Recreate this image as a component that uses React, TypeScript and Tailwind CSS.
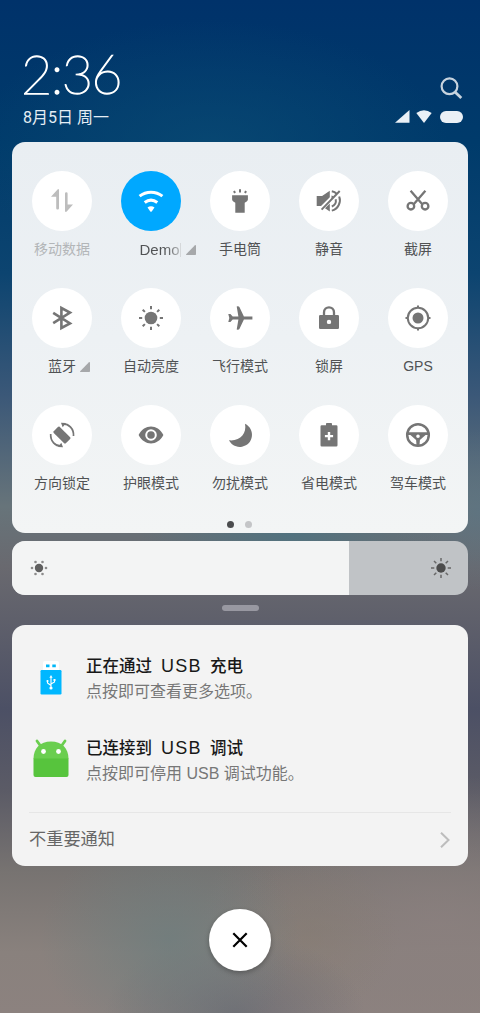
import type { ReactNode } from "react";

type Tile = {
  label: string;
  icon: ReactNode;
  active?: boolean;
  disabled?: boolean;
  expandable?: boolean;
};

const line = {
  fill: "none",
  stroke: "currentColor",
  strokeWidth: 2,
} as const;

const tiles: Tile[] = [
  {
    label: "移动数据",
    disabled: true,
    icon: (
      <>
        <path d="M1 7.8 7.8.2H9v19q0 1.2-1.2 1.2H7.4q-1.2 0-1.2-1.2V7.8Z" />
        <path d="M15 4.4q0-1.2 1.3-1.2t1.3 1.2v11H23l-6.5 7.4H15Z" />
      </>
    ),
  },
  {
    label: "Demo",
    active: true,
    expandable: true,
    icon: (
      <>
        <path {...line} strokeWidth={3.1} d="M.6 7.1C7.2 1.9 16.8 1.9 23.4 7.1" />
        <path {...line} strokeWidth={3.1} d="M5.7 13.4c4-3 8.600-3 12.600 0" />
        <path d="M8.500 18.500c2-1.600 5-1.600 7 0L12.700 22.500q-.7.7-1.400 0Z" />
      </>
    ),
  },
  {
    label: "手电筒",
    icon: (
      <>
        <path d="M4.100 6.200h15.800v4.200q0 1.200-1.200 2l-2 1.400v9.900H7.300v-9.900l-2-1.400q-1.200-.8-1.200-2Z" />
        <path {...line} d="M12 .2v3.400M6 2l1 2M18 2l-1 2" />
      </>
    ),
  },
  {
    label: "静音",
    icon: (
      <>
        <path d="M-.3 7h5.400l7.700-5.200v6.500L4 17H-.3Z" />
        <path d="M8 19.200 12.800 14.500v7.900Z" />
        <path
          {...line}
          strokeWidth={2}
          d="M4.600 20.600 22.700 2M14.800 2.200c2 .4 3.600 1.200 4.800 2.500M22.200 7.500c2.100 5.400-.8 12.500-7.400 14.100M18.700 10.300c.6 3-.8 6-3.900 7.200"
        />
        <path d="M14.500 6.500q1.500.2 2.200 1.200l-2.200 2.200Z" />
      </>
    ),
  },
  {
    label: "截屏",
    icon: (
      <>
        <path {...line} strokeWidth={2.300} d="m4.600 1.800 11.700 13.400M19.400 1.800 7.700 15.200" />
        <circle {...line} strokeWidth={2.300} cx="4.900" cy="17.200" r="3.300" />
        <circle {...line} strokeWidth={2.300} cx="19.100" cy="17.200" r="3.300" />
      </>
    ),
  },
  {
    label: "蓝牙",
    expandable: true,
    icon: (
      <path {...line} strokeWidth={2.600} d="m3.200 6.800 16.800 10.500-8.600 4.700V2L20 6.700 3.200 17.200" />
    ),
  },
  {
    label: "自动亮度",
    icon: (
      <>
        <circle cx="12" cy="12" r="6.300" />
        <path
          {...line}
          d="M12 0v3.200M12 20.800V24M0 12h3.200M20.800 12H24M3.700 3.700 5.900 5.900M18.100 18.100l2.200 2.200M20.300 3.700l-2.200 2.200M5.900 18.100l-2.200 2.200"
        />
      </>
    ),
  },
  {
    label: "飞行模式",
    icon: (
      <path d="M24.400 10.600v2.800h-8.500l-4.500 9.500q-.5 1.100-2.700.7L10.400 13.400H4.700l-2.300 2.500H.3L1.300 12 .3 8.100h2.100l2.300 2.500h5.700L8.700.4q2.200-.4 2.700.7l4.500 9.500Z" />
    ),
  },
  {
    label: "锁屏",
    icon: (
      <>
        <path {...line} strokeWidth={2.300} d="M7 10V6.600c0-6.900 10-6.900 10 0V10" />
        <path
          fillRule="evenodd"
          d="M3.200 9h17.600q1.200 0 1.200 1.200v11.600q0 1.200-1.200 1.200H3.200Q2 23 2 21.800V10.200Q2 9 3.200 9ZM12 13.700a2.200 2.200 0 1 0 0 4.400 2.200 2.200 0 0 0 0-4.400Z"
        />
      </>
    ),
  },
  {
    label: "GPS",
    icon: (
      <>
        <circle {...line} cx="12" cy="12" r="10.200" />
        <circle cx="12" cy="12" r="5.500" />
        <path {...line} d="M12-.5V2M12 22v2.500M-.5 12H2M22 12h2.500" />
      </>
    ),
  },
  {
    label: "方向锁定",
    icon: (
      <>
        <path d="m8.100 3.700 1.200-.3 11.100 11.100v1.200l-4.800 4.900h-1.200L3.500 9.700V8.500Z" />
        <path {...line} strokeWidth={1.700} d="M12 1c7-.5 12 5 11.500 12M12 23C5 23.500.3 18 .7 11" />
        <path d="M11-.2 16 0l-3.300 4.200ZM13 24.200 8 24l3.300-4.200Z" />
      </>
    ),
  },
  {
    label: "护眼模式",
    icon: (
      <>
        <path
          fillRule="evenodd"
          d="M-.4 12C5.500.7 18.500.7 24.400 12 18.500 23.300 5.500 23.300-.4 12ZM12 6.200a5.800 5.800 0 1 0 0 11.600 5.800 5.800 0 0 0 0-11.600Z"
        />
        <circle cx="12" cy="12" r="3.800" />
      </>
    ),
  },
  {
    label: "勿扰模式",
    icon: <path d="M17 .8C27.500 6 26 21.500 14 23.700 8 24.800 3 21.500 1 17.300 12 18.500 19 10.500 17 .8Z" />,
  },
  {
    label: "省电模式",
    icon: (
      <>
        <path d="M4.700 2.300H9V.8q0-.9.9-.9h4.200q.9 0 .9.900v1.500h4.300q1.200 0 1.200 1.200v18.700q0 1.200-1.200 1.200H4.700q-1.200 0-1.200-1.200V3.500q0-1.200 1.200-1.200Z" />
        <path d="M12 9v8.200M7.900 13.100h8.200" stroke="white" strokeWidth="2.400" />
      </>
    ),
  },
  {
    label: "驾车模式",
    icon: (
      <>
        <circle {...line} strokeWidth={2.500} cx="12" cy="12" r="10.800" />
        <path
          fillRule="evenodd"
          d="M1 9.300h22v2.600h-3.400L13.900 17 13.400 23h-2.800L10.100 17 4.400 11.900H1ZM12 11.400a1.800 1.800 0 1 0 0 3.600 1.800 1.800 0 0 0 0-3.600Z"
        />
      </>
    ),
  },
];

function QuickTile({ tile }: { tile: Tile }) {
  const circle = tile.active
    ? "bg-[#00a8ff] text-white"
    : tile.disabled
      ? "bg-white text-[#bdbdbd]"
      : "bg-white text-[#757575]";

  return (
    <div className="flex h-[117px] flex-col items-center">
      <div className={`flex size-[60px] items-center justify-center rounded-full ${circle}`}>
        <svg viewBox="0 0 24 24" className="size-6 overflow-visible" fill="currentColor">
          {tile.icon}
        </svg>
      </div>
      <div
        className={`relative mt-2 flex h-[21px] items-center whitespace-nowrap text-sm leading-[21px] ${
          tile.disabled ? "text-[#b3b6b8]" : "text-[#505254]"
        }`}
      >
        {tile.active ? (
          <span className="ml-[17px] bg-linear-to-r from-[#505254] from-65% to-[#b8bbbd] bg-clip-text text-[15px] text-transparent">
            {tile.label}
          </span>
        ) : (
          <span>{tile.label}</span>
        )}
        {tile.active && <span className="absolute top-1 left-[58px] h-3.5 w-px bg-[#d5d8da]" />}
        {tile.expandable && (
          <svg
            viewBox="0 0 10 10"
            className={`absolute top-[6px] size-2.5 ${tile.active ? "left-[64px]" : "left-[32px]"}`}
            fill="#a6a8aa"
          >
            <path d="M10 .8V9.200q0 .8-.8.8H.8q-1.200 0-.4-.9L8.700.5Q10-.5 10 .8Z" />
          </svg>
        )}
      </div>
    </div>
  );
}

function UsbIcon() {
  return (
    <svg viewBox="0 0 22 34" className="mt-[9px] h-[34px] w-[22px]">
      <rect x="3" y="0" width="16" height="12" rx="2" fill="white" />
      <path d="M6 3.500h3.500v2.800H6zM12.300 3.500h3.500v2.800h-3.500z" fill="#00b7f8" />
      <rect x=".5" y="9" width="21" height="24.500" rx="1.200" fill="#00b7ff" />
      <path
        d="M11 16v11M11 24.500 7.500 22v-2.500M11 23l3.500-2v-2.500"
        stroke="white"
        fill="none"
        strokeWidth="1.100"
      />
      <g fill="white">
        <path d="m11 14 1.600 2.800H9.400z" />
        <circle cx="11" cy="27" r="1.600" />
        <circle cx="7.500" cy="20" r="1.100" />
        <path d="M13.500 18h2v2h-2z" />
      </g>
    </svg>
  );
}

function AndroidIcon() {
  return (
    <svg viewBox="0 0 36 38" className="mt-[5px] h-[38px] w-9">
      <path d="m4 2 5 7M32 2l-5 7" stroke="#6ace4f" strokeWidth="2.800" strokeLinecap="round" />
      <path d="M.5 20C.5 9 7 2.500 18 2.500S35.500 9 35.500 20Z" fill="#6ace4f" />
      <path d="M.5 19.500h35V36q0 2-2 2h-31q-2 0-2-2Z" fill="#57c43d" />
      <circle cx="10.500" cy="12.500" r="2.400" fill="white" />
      <circle cx="25.500" cy="12.500" r="2.400" fill="white" />
    </svg>
  );
}

function Notification({
  icon,
  title,
  text,
}: {
  icon: ReactNode;
  title: [string, string, string];
  text: string;
}) {
  return (
    <div className="flex h-[82px]">
      <div className="flex w-[77px] justify-center">{icon}</div>
      <div className="-ml-[3px] pt-px">
        <div className="flex h-[26px] text-[16.5px] font-medium leading-[26px] text-[#181818]">
          <span>{title[0]}</span>
          <span className="ml-[9px] w-[49px] text-[18px] font-normal tracking-[1.2px]">
            {title[1]}
          </span>
          <span>{title[2]}</span>
        </div>
        <div className="text-base leading-[26px] text-[#777]">{text}</div>
      </div>
    </div>
  );
}

export default function App() {
  return (
    <main className="flex h-[1013px] w-[480px] flex-col overflow-hidden bg-[radial-gradient(ellipse_130px_110px_at_170px_940px,#6a7d7eb0,transparent),radial-gradient(ellipse_130px_80px_at_235px_1013px,#646771b0,transparent),radial-gradient(ellipse_90px_80px_at_310px_935px,#857a6e70,transparent),radial-gradient(ellipse_240px_150px_at_440px_925px,#8b807fcc,transparent),radial-gradient(ellipse_150px_50px_at_290px_535px,#4c7381cc,transparent),radial-gradient(ellipse_90px_80px_at_480px_510px,#5b7483b0,transparent),radial-gradient(ellipse_240px_130px_at_210px_150px,#0b4c75b0,transparent),linear-gradient(180deg,#00326a_0%,#003b6b_14%,#0c4470_27%,#3b5878_39%,#67747a_50%,#69696f_56%,#5f606b_61%,#4c5065_70%,#5b5b66_78%,#777371_86%,#89817d_94%,#8c827f_100%)] px-3 font-['Liberation_Sans','Noto_Sans_CJK_SC',sans-serif]">
      <header className="flex h-[142px] shrink-0 justify-between text-white">
        <div className="pl-[9px] pt-[41px]">
          <div className="h-[65px] whitespace-nowrap font-[Lato,sans-serif] text-[54px] font-extralight leading-[65px] tracking-[-1.6px] [-webkit-text-stroke:1.3px_white]">
            2:36
          </div>
          <div className="pl-[2px] font-[Roboto,'Noto_Sans_CJK_SC',sans-serif] text-[16px] leading-[23px] text-[#e5edf4]">
            8月5日 周一
          </div>
        </div>
        <div className="flex flex-col items-end pr-[5px] pt-[76px]">
          <svg viewBox="0 0 24 24" className="size-6" {...line} opacity=".78">
            <circle cx="10.500" cy="10.300" r="7.900" strokeWidth="2.200" />
            <path d="m16 16 6.300 6" strokeWidth="2.800" />
          </svg>
          <div className="mt-[10px] flex items-center">
            <svg viewBox="0 0 15 13" className="mr-[6px] h-[13px] w-[15px]" fill="#eaf0f6">
              <path d="M14.500 0v12.800H0Z" />
            </svg>
            <svg viewBox="0 0 16 13" className="mr-[8px] h-[13px] w-[16px]" fill="#eaf0f6">
              <path d="M.3 3.100Q8-2.800 15.700 3.100L8 13Z" />
            </svg>
            <div className="h-[12px] w-[23px] rounded-full bg-[#eaf0f6]" />
          </div>
        </div>
      </header>

      <section className="h-[391px] shrink-0 rounded-[13px] bg-linear-to-b from-[#e9eef2] via-[#edf1f4] to-[#f3f5f5] px-[5.5px] pt-[29px]">
        <div className="grid grid-cols-5">
          {tiles.map((tile) => (
            <QuickTile key={tile.label} tile={tile} />
          ))}
        </div>
        <div className="-mt-[1px] flex justify-center gap-[11px] pr-px">
          <span className="size-[7px] rounded-full bg-[#4b4c4e]" />
          <span className="size-[7px] rounded-full bg-[#c4c5c7]" />
        </div>
      </section>

      <div className="mt-[8px] flex h-[54px] shrink-0 overflow-hidden rounded-[13px] bg-[#c0c3c6]">
        <div className="flex w-[337px] items-center bg-[#f3f4f4] pl-[18px]">
          <svg viewBox="0 0 18 18" className="size-[18px]">
            <circle cx="9" cy="9" r="4.200" fill="#606060" />
            <g fill="#8b8b8b">
              <circle cx="2" cy="9" r="1.300" />
              <circle cx="16" cy="9" r="1.300" />
              <circle cx="5.500" cy="3" r="1.300" />
              <circle cx="12.500" cy="3" r="1.300" />
              <circle cx="5.500" cy="15" r="1.300" />
              <circle cx="12.500" cy="15" r="1.300" />
            </g>
          </svg>
        </div>
        <div className="flex flex-1 items-center justify-end pr-[16px]">
          <svg viewBox="0 0 22 22" className="size-[22px]">
            <circle cx="11" cy="11" r="4.700" fill="#4c4c4c" />
            <path
              d="M11 1v3.300M11 17.700V21M1 11h3.300M17.700 11H21M4 4l2.300 2.300M15.700 15.700 18 18M18 4l-2.300 2.300M6.300 15.700 4 18"
              stroke="#686868"
              strokeWidth="1.500"
            />
          </svg>
        </div>
      </div>

      <div className="mx-auto mt-[10px] h-[6px] w-[37px] shrink-0 rounded-full bg-[#9898a1]" />

      <section className="mt-[14px] flex h-[241px] shrink-0 flex-col rounded-[13px] bg-[#f3f3f3] pt-[27px]">
        <Notification
          icon={<UsbIcon />}
          title={["正在通过", "USB", "充电"]}
          text="点按即可查看更多选项。"
        />
        <Notification
          icon={<AndroidIcon />}
          title={["已连接到", "USB", "调试"]}
          text="点按即可停用 USB 调试功能。"
        />
        <div className="mx-[17px] -mt-1 flex h-[54px] items-center justify-between border-t border-[#e6e6e6] text-[17.2px] text-[#666]">
          <span>不重要通知</span>
          <svg viewBox="0 0 10 16" className="mr-[1px] h-[16px] w-[10px]" {...line} stroke="#bdbdbd">
            <path d="m1 .7 7.500 7.300L1 15.300" />
          </svg>
        </div>
      </section>

      <button
        aria-label="清除通知"
        className="mx-auto mt-[43px] flex size-[62px] shrink-0 items-center justify-center rounded-full bg-white text-black shadow-[0_2px_5px_#0004]"
      >
        <svg viewBox="0 0 16 16" className="size-4" {...line} strokeWidth={2.200}>
          <path d="m1.300 1.300 13.400 13.400M14.700 1.300 1.300 14.700" />
        </svg>
      </button>
    </main>
  );
}
